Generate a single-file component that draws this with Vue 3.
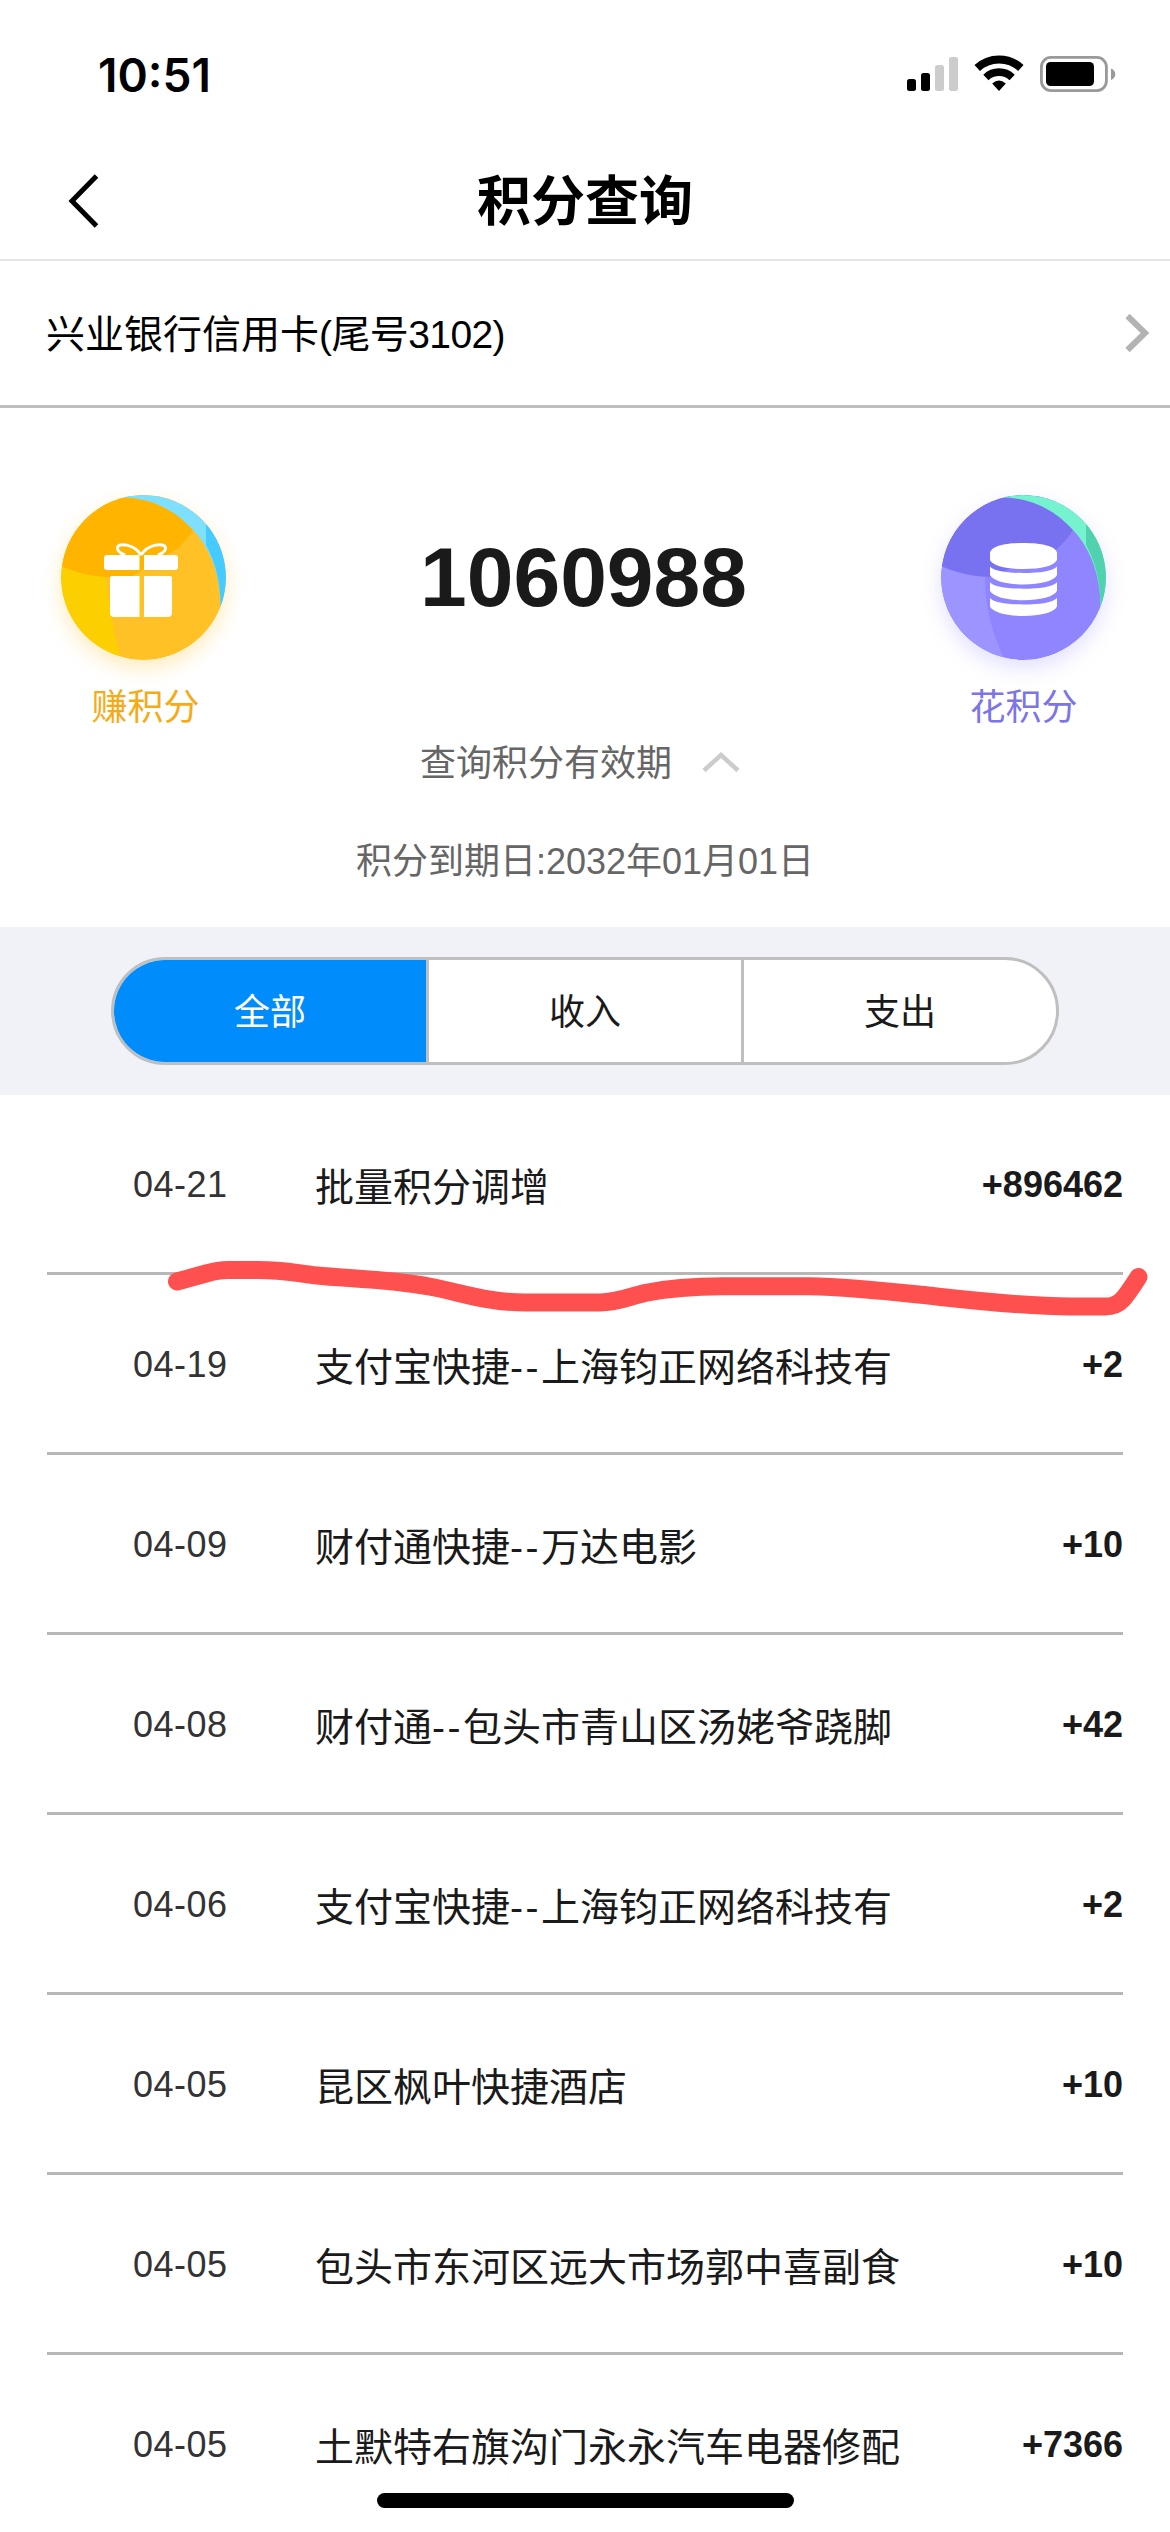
<script setup>
import { ref } from 'vue'

const tabs = ['全部', '收入', '支出']
const activeTab = ref(0)

const records = [
  { date: '04-21', title: ['批量积分调增'], points: '+896462' },
  { date: '04-19', title: ['支付宝快捷', '--', '上海钧正网络科技有'], points: '+2' },
  { date: '04-09', title: ['财付通快捷', '--', '万达电影'], points: '+10' },
  { date: '04-08', title: ['财付通', '--', '包头市青山区汤姥爷跷脚'], points: '+42' },
  { date: '04-06', title: ['支付宝快捷', '--', '上海钧正网络科技有'], points: '+2' },
  { date: '04-05', title: ['昆区枫叶快捷酒店'], points: '+10' },
  { date: '04-05', title: ['包头市东河区远大市场郭中喜副食'], points: '+10' },
  { date: '04-05', title: ['土默特右旗沟门永永汽车电器修配'], points: '+7366' },
]
</script>

<template>
  <div class="page">
    <div class="status">
      <span class="time">10:51</span>
      <svg class="status-icons" width="212" height="40" viewBox="905 54 212 40">
        <rect x="907" y="79" width="9" height="12" rx="2.5" />
        <rect x="921" y="73" width="9" height="18" rx="2.5" />
        <rect x="935" y="65" width="9" height="26" rx="2.5" fill="#ccc" />
        <rect x="949" y="57" width="9" height="34" rx="2.5" fill="#ccc" />
        <path d="M977.2 68A32 32 0 0 1 1020.8 68" fill="none" stroke="#000" stroke-width="8" />
        <path d="M985.9 77.4A19 19 0 0 1 1012.1 77.4" fill="none" stroke="#000" stroke-width="7.6" />
        <path d="M992.2 83.6Q999 77.6 1005.8 83.6L999 91Z" />
        <rect x="1041.4" y="57.4" width="65" height="33.2" rx="9.5" fill="none" stroke="#999" stroke-width="2.8" />
        <rect x="1046" y="62" width="48" height="24" rx="4.5" />
        <path d="M1111 68.5Q1115.3 70.5 1115.3 74.2T1111 80Z" fill="#999" />
      </svg>
    </div>

    <header class="nav">
      <svg class="back" width="34" height="56" viewBox="0 0 34 56">
        <path d="M29.5 3L5 28L29.5 53" fill="none" stroke="#000" stroke-width="5" />
      </svg>
      <h1>积分查询</h1>
    </header>

    <div class="card">
      <span class="card-name">兴业银行信用卡<span class="tail">(尾号3102)</span></span>
      <svg width="26" height="42" viewBox="0 0 26 42">
        <path d="M3.500 4L21 21L3.500 38" fill="none" stroke="#b3b3b3" stroke-width="6" />
      </svg>
    </div>

    <section class="summary">
      <div class="summary-top">
        <div class="action earn">
          <svg class="badge" viewBox="0 0 165 165">
            <defs><clipPath id="disc"><circle cx="82.500" cy="82.500" r="82.500" /></clipPath></defs>
            <g clip-path="url(#disc)">
              <rect width="165" height="165" fill="#ffc125" />
              <path d="M0 71Q22 81 45 82Q48 120 60 165H0Z" fill="#fcd000" />
              <path d="M0 71Q22 81 45 82H70L116 54Q126 45 132 35L110 0H0Z" fill="#ffb400" />
              <path d="M60 2.500C91 2.500 115 16 132 35C150 54 160 82 159.500 113L170 113V0H60Z" fill="#7fdfff" />
              <path d="M145 30V50C155 68 160 90 159.500 113H170V30Z" fill="#45cbff" />
            </g>
            <g fill="#fff">
              <path d="M46 60H78.500V75H46Q43 75 43 72V63Q43 60 46 60Z" />
              <path d="M83 60H114Q117 60 117 63V72Q117 75 114 75H83Z" />
              <path d="M51 81H78.500V122H53Q49 122 49 118V83Q49 81 51 81Z" />
              <path d="M83 81H109Q111 81 111 83V118Q111 122 107 122H83Z" />
            </g>
            <path d="M80 60C73 49 57 47 56.500 53Q56 57 64 60M80 60C87 49 104 47 104.500 53Q105 57 97 60" fill="none" stroke="#fff" stroke-width="3" />
          </svg>
          <span>赚积分</span>
        </div>
        <strong class="total">1060988</strong>
        <div class="action spend">
          <svg class="badge" viewBox="0 0 165 165">
            <g clip-path="url(#disc)">
              <rect width="165" height="165" fill="#8f86ff" />
              <path d="M0 71Q22 81 44 82Q44 125 64 165H0Z" fill="#9c94ff" />
              <path d="M0 71Q22 81 49 82L116 54Q126 45 132 35L110 0H0Z" fill="#7872f0" />
              <path d="M60 2.500C91 2.500 115 16 132 35C150 54 160 82 159.500 113L170 113V0H60Z" fill="#75f3cf" />
              <path d="M145 30V50C155 68 160 90 159.500 113H170V30Z" fill="#50d2ae" />
            </g>
            <g fill="#fff">
              <path d="M49 58C50 51 65 48 82.500 48S115 51 116 58V65C113 71 100 74 82.500 74S52 71 49 65Z" />
              <path v-for="n in 3" :key="n" :transform="`translate(0 ${(n - 1) * 15.7})`" d="M49 71.500C53 76 66 78 82.500 78S112 76 116 71.500V80C113 86 99 89.500 82.500 89.500S52 86 49 80Z" />
            </g>
          </svg>
          <span>花积分</span>
        </div>
      </div>
      <div class="toggle">
        <span>查询积分有效期</span>
        <svg width="38" height="24" viewBox="0 0 38 24">
          <path d="M2 20.500L19 5L36 20.500" fill="none" stroke="#ccc" stroke-width="4.500" />
        </svg>
      </div>
      <div class="expiry">积分到期日:2032年01月01日</div>
    </section>

    <div class="filter">
      <div class="segments">
        <button v-for="(tab, i) in tabs" :key="tab" :class="{ active: i === activeTab }" @click="activeTab = i">{{ tab }}</button>
      </div>
    </div>

    <ul class="records">
      <li v-for="(r, i) in records" :key="i">
        <span class="date">{{ r.date }}</span>
        <span class="title"><span v-for="(part, j) in r.title" :key="j" :class="{ dash: part === '--' }">{{ part }}</span></span>
        <strong class="points">{{ r.points }}</strong>
      </li>
    </ul>

    <svg class="marker" width="1170" height="70" viewBox="0 1255 1170 70">
      <path d="M177 1281.500L206 1273.500Q218 1270 228 1270H258C285 1270 294 1273 317 1275.500C345 1278.500 390 1279 429 1286.500C460 1292 486 1302.500 525 1302.500H600C618 1302.500 628 1297 645 1293C672 1287.500 700 1286.300 723 1286.300H809C841 1287 885 1291 921 1294.800C965 1299.500 1022 1306.500 1070 1306.500H1105Q1116 1306.500 1122 1300Q1127 1295 1138.500 1277" />
    </svg>
    <div class="home-bar"></div>
  </div>
</template>

<style>
body {
  margin: 0;
  background: #fff;
}
</style>

<style scoped>
.page {
  position: relative;
  width: 1170px;
  height: 2532px;
  overflow: hidden;
  background: #fff;
  color: #000;
  font-family: "Liberation Sans", "Noto Sans CJK SC", sans-serif;
  font-size: 36px;
  display: flex;
  flex-direction: column;
}
svg {
  display: block;
  flex: none;
}
.status {
  height: 142px;
  flex: none;
  box-sizing: border-box;
  padding: 54px 53px 0 98px;
  display: flex;
  justify-content: space-between;
  align-items: flex-start;
}
.time {
  font: 600 46px/42px Inter, sans-serif;
}
.nav {
  height: 119px;
  flex: none;
  box-sizing: border-box;
  border-bottom: 2px solid #e5e5e5;
  display: grid;
  grid-template-columns: 1fr auto 1fr;
  align-items: center;
}
.back {
  margin-left: 67px;
}
h1 {
  margin: 0;
  padding-top: 3px;
  font-size: 54px;
  line-height: 80px;
  font-weight: 600;
}
.card {
  height: 147px;
  flex: none;
  box-sizing: border-box;
  border-bottom: 3px solid #bfbfbf;
  padding: 0 20px 0 46px;
  display: flex;
  justify-content: space-between;
  align-items: center;
  font-size: 39px;
}
.card-name {
  padding-bottom: 4px;
}
.tail {
  letter-spacing: -0.6px;
}
.summary {
  height: 519px;
  flex: none;
  box-sizing: border-box;
  padding-top: 87px;
}
.summary-top {
  height: 239px;
  display: flex;
  justify-content: space-between;
  padding: 0 64px 0 61px;
}
.action {
  width: 165px;
  display: flex;
  flex-direction: column;
  align-items: center;
  gap: 22px;
  line-height: 52px;
}
.badge {
  width: 165px;
  height: 165px;
  border-radius: 50%;
}
.earn {
  color: #f5ab16;
}
.earn span {
  padding-left: 4px;
}
.earn .badge {
  box-shadow: 0 8px 20px rgba(255, 193, 37, 0.3);
}
.spend {
  color: #7d75e6;
}
.spend .badge {
  box-shadow: 0 8px 20px rgba(143, 134, 255, 0.26);
}
.total {
  font-size: 84px;
  line-height: 96px;
  margin-top: 34px;
  color: #1a1a1a;
}
.toggle {
  display: flex;
  align-items: center;
  gap: 30px;
  padding-left: 420px;
  height: 56px;
  color: #666;
}
.toggle span {
  padding-bottom: 5px;
}
.expiry {
  margin-top: 44px;
  height: 56px;
  line-height: 56px;
  text-align: center;
  color: #666;
}
.filter {
  height: 168px;
  flex: none;
  box-sizing: border-box;
  padding: 30px 111px;
  background: #f1f2f8;
}
.segments {
  height: 108px;
  box-sizing: border-box;
  border: 3px solid #bfbfbf;
  border-radius: 54px;
  background: #fff;
  overflow: hidden;
  display: flex;
}
button {
  flex: 1;
  box-sizing: border-box;
  border: 0;
  border-right: 3px solid #bfbfbf;
  padding: 0 0 5px;
  background: none;
  font: inherit;
  color: #1a1a1a;
}
button:last-child {
  border-right: 0;
}
button.active {
  background: #008cfa;
  color: #fff;
}
.records {
  list-style: none;
  margin: 0;
  padding: 0 47px;
}
li {
  height: 180px;
  box-sizing: border-box;
  border-bottom: 3px solid #b7b7b7;
  display: flex;
  align-items: center;
  color: #1a1a1a;
}
.date {
  width: 182px;
  padding: 2px 0 0 86px;
  color: #333;
  letter-spacing: 0.5px;
}
.title {
  flex: 1;
  font-size: 39px;
  white-space: nowrap;
}
.dash {
  letter-spacing: 2.5px;
}
.points {
  padding-top: 2px;
}
.marker {
  position: absolute;
  left: 0;
  top: 1255px;
  fill: none;
  stroke: #ff5050;
  stroke-width: 18px;
  stroke-linecap: round;
  stroke-linejoin: round;
}
.home-bar {
  position: absolute;
  left: 377px;
  top: 2493px;
  width: 417px;
  height: 15px;
  border-radius: 8px;
  background: #000;
}
</style>
